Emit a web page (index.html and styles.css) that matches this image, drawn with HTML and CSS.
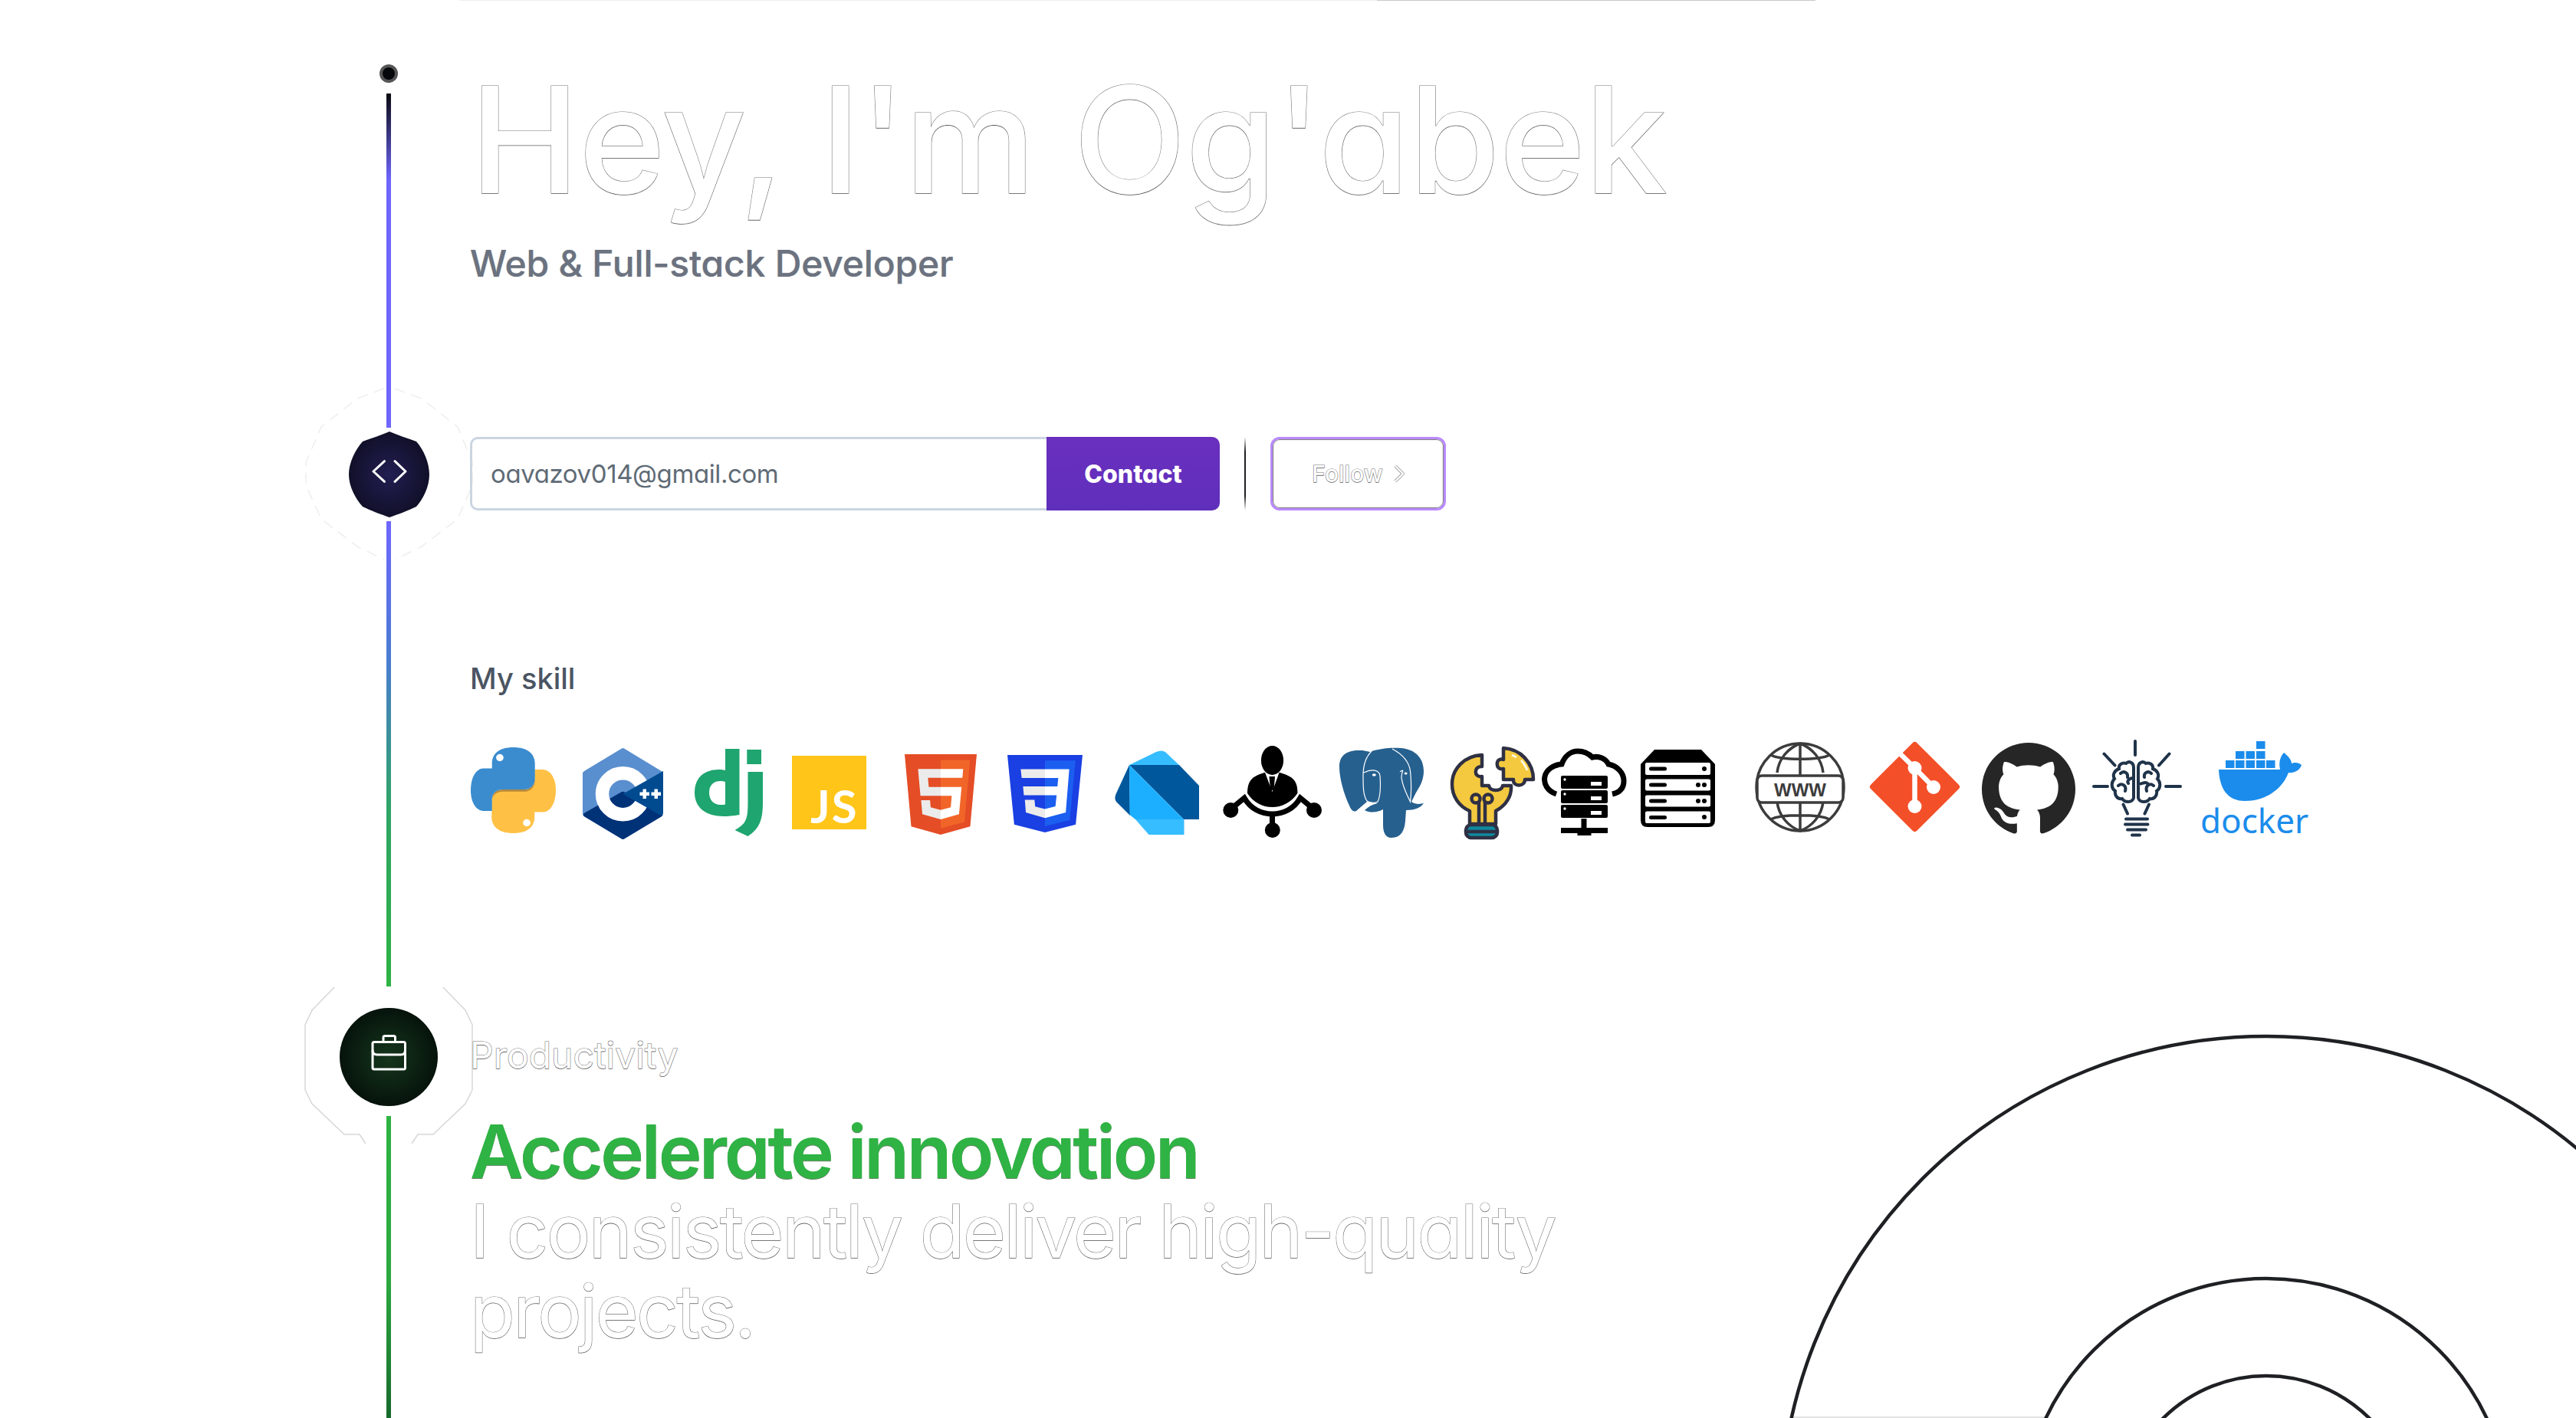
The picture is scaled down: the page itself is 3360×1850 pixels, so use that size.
FILE: index.html
```html
<!DOCTYPE html>
<html lang="en">
<head>
<meta charset="utf-8">
<title>Og'abek</title>
<link rel="stylesheet" href="styles.css">
</head>
<body>
<div class="hairline"></div><div class="hairline-dark"></div>
<svg class="arcs" viewBox="0 0 1060 520">
  <path fill="none" stroke="#e2e2e2" stroke-width="2" d="M37 519H370"/>
  <g fill="none" stroke="#1f2024" stroke-width="4.500">
    <circle cx="656" cy="656" r="634"/>
    <circle cx="656" cy="656" r="318"/>
    <circle cx="656" cy="656" r="191"/>
  </g>
</svg>
<main class="page">
  <aside class="rail">
    <span class="dot"></span>
    <span class="seg seg-a"></span>
    <svg class="node node-code" viewBox="0 0 105 112">
      <defs><radialGradient id="gc"><stop offset="0" stop-color="#211e52"/><stop offset="1" stop-color="#111029"/></radialGradient></defs>
      <path class="halo" stroke-dasharray="14 9" d="M46 -56 L11 -43 L-36 -6 L-56 40 V70 L-36 114 L11 150 L46 167 M60 -56 L95 -43 L142 -6 L161 40 V70 L142 114 L95 150 L60 167"/>
      <path fill="url(#gc)" d="M53 0C42 5 28 9 18 13C9 23 0 40 0 56C0 72 9 88 18 98C28 103 42 108 53 112C64 108 78 103 88 98C97 88 105 72 105 56C105 40 97 23 88 13C78 9 64 5 53 0Z"/>
      <path fill="none" stroke="#fff" stroke-width="3" stroke-linecap="round" stroke-linejoin="round" d="M46.500 38.700L32 52L46.500 65.300M60 38.700L74 52L60 65.300"/>
    </svg>
    <span class="seg seg-b"></span>
    <svg class="node node-work" viewBox="0 0 128 128">
      <defs><radialGradient id="gw"><stop offset="0" stop-color="#15361c"/><stop offset="1" stop-color="#06130c"/></radialGradient></defs>
      <path class="halo halo-strong" d="M-7 -27L-36 3L-45 22V107L-36 125L6 165H26L34 177M135 -27L164 3L173 22V107L164 125L122 165H102L94 177"/>
      <circle cx="64" cy="64" r="64" fill="url(#gw)"/>
      <g fill="none" stroke="#fff" stroke-width="3" stroke-linejoin="round">
        <rect x="43" y="44.500" width="42.500" height="35.500" rx="2"/>
        <path d="M43 55q0 6 6 6H80q5.500 0 5.500-6"/>
        <path d="M57 44V38.500q0-2 2-2H70.500q2 0 2 2V44"/>
      </g>
    </svg>
    <span class="seg seg-c"></span>
  </aside>

  <section class="content">
    <h1 class="title ghost">Hey, I'm Og'abek</h1>
    <p class="role">Web &amp; Full-stack Developer</p>

    <div class="actions">
      <div class="email">oavazov014@gmail.com</div>
      <button class="contact">Contact</button>
      <span class="divider"></span>
      <button class="follow"><span class="ghost">Follow</span>
        <svg class="chev" viewBox="0 0 14 22"><path d="M2 1L12 11L2 21" fill="none" stroke="#9a9a9a" stroke-width="4"/><path d="M2 1L12 11L2 21" fill="none" stroke="#fff" stroke-width="2.400"/></svg>
      </button>
    </div>

    <h2 class="skill-head">My skill</h2>

    <div class="skills">
      <svg class="ic i-py" viewBox="0 0 24 24" preserveAspectRatio="none">
        <path fill="#ffc145" transform="rotate(180 12 12)" d="M12 0C8 0 6 1.800 6 4.500V5.900H3.600C1.500 5.900 0 8.500 0 12C0 15.400 1.500 17.800 3.800 17.800H6V14.500C6 12.900 7.200 11.800 9 11.800H15C16.900 11.800 18.100 10.500 18.100 8.800V4.500C18.100 1.800 16 0 12 0Z"/>
        <path fill="#b8893a" d="M6 14.500C6 12.900 7.200 11.800 9 11.800H15C16.900 11.800 18.100 10.500 18.100 8.800V9.300C18.100 11 16.900 12.400 15 12.400H9C7.200 12.400 6 13.500 6 15Z"/>
        <path fill="#3a8ccf" d="M12 0C8 0 6 1.800 6 4.500V5.900H3.600C1.500 5.900 0 8.500 0 12C0 15.400 1.500 17.800 3.800 17.800H6V14.500C6 12.900 7.200 11.800 9 11.800H15C16.900 11.800 18.100 10.500 18.100 8.800V4.500C18.100 1.800 16 0 12 0Z"/>
        <ellipse cx="8.200" cy="2.900" rx="1.050" ry="1" fill="#fff"/>
        <ellipse cx="15.800" cy="21.100" rx="1.050" ry="1" fill="#fff"/>
      </svg>

      <svg class="ic i-cpp" viewBox="0 0 105 119">
        <path fill="#5a8fcf" stroke="#5a8fcf" stroke-width="6" stroke-linejoin="round" d="M52.500 3L102 33V86L52.500 116L3 86V33Z"/>
        <path fill="#003278" stroke="#003278" stroke-width="6" stroke-linejoin="round" d="M4 87L52.500 59.700L101 87L52.500 116Z"/>
        <circle cx="52.500" cy="59.700" r="27" fill="none" stroke="#fff" stroke-width="17.500"/>
        <path fill="#004b90" d="M52.500 59.700L105 30V85L102 88Z"/>
        <path fill="#fff" d="M78.500 53.500h4.500v4h4v4.500h-4v4h-4.500v-4h-4v-4.500h4ZM93.500 53.500h4.500v4h4v4.500h-4v4h-4.500v-4h-4v-4.500h4Z"/>
      </svg>

      <svg class="ic i-dj" viewBox="0 0 89 114">
        <path fill="#1fa56f" fill-rule="evenodd" d="M40 0H58.500V86C50 87.500 44 88 38 88C15 88 0 77 0 57C0 37 13 27 32 27C35 27 38 27.500 40 28ZM40 43C38 42.500 36 42 34 42C24 42 19 48 19 57C19 66 24 73 34 73C36 73 38 73 40 72.500Z"/>
        <path fill="#1fa56f" d="M68.300 1H87V20H68.300ZM69.500 30H89V70C89 92 85 104 69.500 114L52.500 106C67 98 69.500 92 69.500 70Z"/>
      </svg>

      <svg class="ic i-js" viewBox="0 0 97 96">
        <rect width="97" height="96" fill="#ffc518"/>
        <text class="js-word" x="24" y="88">JS</text>
      </svg>

      <svg class="ic i-html" viewBox="30 0 452 512" preserveAspectRatio="none">
        <path fill="#e44d26" d="M71 460L30 0H482L441 460L255.500 512Z"/>
        <path fill="#f16529" d="M256 472L405 431L440 37H256Z"/>
        <path fill="#ebebeb" d="M256 208H181L176 150H256V94H114L115 109L129 265H256ZM256 355L193 338L189 293H133L141 382L256 414Z"/>
        <path fill="#fff" d="M256 208V265H325L319 338L256 355V414L371 382L387 208ZM256 94V150H392L397 94Z"/>
      </svg>

      <svg class="ic i-css" viewBox="30 0 452 512" preserveAspectRatio="none">
        <path fill="#1a3fe2" d="M71 460L30 0H482L441 460L255.500 512Z"/>
        <path fill="#1b5ef0" d="M256 472L405 431L440 37H256Z"/>
        <path fill="#ebebeb" d="M110 94H256V152H116ZM124 208H256V266H129ZM135 296H193L197 341L256 357V417L141 380Z"/>
        <path fill="#fff" d="M256 94H402L381 380L256 417V357L319 340L326 266H256V208H331L336 152H256Z"/>
      </svg>

      <svg class="ic i-dart" viewBox="0 0 110 110">
        <path fill="#36bdff" d="M19 19L54 2Q63 -2 68 4L84 19Z"/>
        <path fill="#01579b" d="M19 19L2 56Q-2 64 4 69L20 85Z"/>
        <path fill="#01579b" d="M19 19H84L110 46V90H90Z"/>
        <path fill="#1cafff" d="M19 19L90 90H27L19.500 84Z"/>
        <path fill="#36bdff" d="M27 90H90.500V110H44.500Z"/>
      </svg>

      <svg class="ic i-person" viewBox="0 0 129 120">
        <ellipse cx="64.500" cy="19" rx="14.600" ry="19"/>
        <path d="M55 34.700C40 39 32 44 32 62C40 74 52 80 64.500 80C77 80 89 74 97.400 62C98 44 89 39 73.600 34.700L64.500 60Z"/>
        <path d="M60.500 40H68L66.500 58H62Z"/>
        <path fill="none" stroke="#000" stroke-width="7" d="M16 78L28 68C36 82 50 89 64.500 89C79 89 93 82 101 68L113 78M64.500 89V106"/>
        <circle cx="10.300" cy="84" r="10"/><circle cx="119" cy="84" r="10"/><circle cx="64.800" cy="110" r="10"/>
      </svg>

      <svg class="ic i-pg" viewBox="0 0 111 117">
        <path fill="#26608f" d="M0 24C0 8 12 2 28 3C32 3 36 4 40 5C50 1 65 -1 81 0C100 2 110 14 110 30C110 42 105 50 100 58L94 70C100 74 105 73 110 72C106 78 98 81 87 81L86 95C85 108 80 117 68 117C60 117 57 110 57 100L57 80C50 84 40 85 33 81C38 76 44 73 50 72L36 70L22 82C18 84 15 80 13 75C6 60 0 40 0 24Z"/>
        <path fill="none" stroke="#fff" stroke-width="1.200" d="M42 4C34 12 31 24 31 36C31 50 31 62 36 69C40 72 47 72 50 70C54 62 54 50 53 36C52 28 42 27 32 32M69 1C82 8 91 18 92.500 30C94 45 94 58 92.500 70C88 60 82 50 81 38C81 30 86 27 79 30.700"/>
        <ellipse cx="45.300" cy="35" rx="2.500" ry="1.800" fill="#fff"/><ellipse cx="86.600" cy="33" rx="2" ry="1.500" fill="#fff"/>
      </svg>

      <svg class="ic i-bulb" viewBox="0 0 110 122">
        <g stroke="#2f3044" stroke-width="4.500" stroke-linejoin="round">
          <path fill="#f5c93f" d="M41 12C18 13 2 30 2 50C2 66 11 79 25 85V102H59V85C72 78 80 66 79 52H68C67 60 51 60 50 52H41V40C30 42 30 26 41 27Z"/>
          <path fill="#f5c93f" d="M69 3C91 4 108 22 108 44H97C97 54 81 54 82 44H69V30C58 33 58 14 69 18Z"/>
          <path fill="none" d="M37 102V72M45 102V72"/>
          <circle cx="33" cy="69" r="5.500" fill="none"/><circle cx="49" cy="69" r="5.500" fill="none"/>
          <rect x="20" y="103" width="41" height="17" rx="7" fill="#0e8a9e"/>
          <path fill="none" d="M20 112H61"/>
        </g>
        <path fill="none" stroke="#fff8e0" stroke-width="3" d="M80 12L86 15M92 19C96 23 98 27 100 32"/>
      </svg>

      <svg class="ic i-cloud" viewBox="0 0 109 113">
        <path fill="none" stroke="#000" stroke-width="7" d="M18 59C6 55 1 45 3 36C5 27 14 21 25 20C29 9 37 3 46 3C54 3 60 6 65 11C73 9 82 12 86 20C97 22 106 31 106 42C106 52 100 57 91 59"/>
        <rect x="24" y="35" width="61" height="17" rx="2"/><rect x="24" y="54" width="61" height="17" rx="2"/><rect x="24" y="73" width="61" height="17" rx="2"/>
        <g fill="#fff">
          <circle cx="29" cy="40" r="1.700"/><rect x="63" y="43" width="14" height="5"/>
          <circle cx="29" cy="59" r="1.700"/><rect x="63" y="62" width="14" height="5"/>
          <circle cx="29" cy="78" r="1.700"/><rect x="63" y="81" width="14" height="5"/>
        </g>
        <path d="M50.500 91H57.500V103H85V110H63.500V113H45.500V110H24V103H50.500Z"/>
      </svg>

      <svg class="ic i-stack" viewBox="0 0 97 101">
        <path d="M18 0H79L97 19V92Q97 101 88 101H9Q0 101 0 92V19Z"/>
        <g fill="#fff">
          <rect x="6" y="17" width="85" height="16" rx="2"/><rect x="6" y="38.500" width="85" height="15" rx="2"/>
          <rect x="6" y="59.500" width="85" height="15" rx="2"/><rect x="6" y="80.500" width="85" height="15.500" rx="2"/>
        </g>
        <rect x="11" y="22.500" width="23" height="5" rx="2.500"/><rect x="11" y="43.500" width="23" height="5" rx="2.500"/>
        <rect x="11" y="64.500" width="23" height="5" rx="2.500"/><rect x="11" y="86" width="23" height="5" rx="2.500"/>
        <circle cx="83" cy="25" r="3"/><circle cx="75" cy="46" r="3"/><circle cx="83" cy="46" r="3"/>
        <circle cx="75" cy="67" r="3"/><circle cx="83" cy="67" r="3"/><circle cx="83" cy="88" r="3"/>
      </svg>

      <svg class="ic i-www" viewBox="0 0 116 118">
        <g fill="none" stroke="#3c3c3c" stroke-width="3.500">
          <circle cx="58" cy="59" r="57"/>
          <path d="M58 2V116M28 40C30 22 42 8 58 2C74 8 86 22 88 40M28 78C30 96 42 110 58 116C74 110 86 96 88 78M20 17C32 24 84 24 96 17M20 101C32 94 84 94 96 101"/>
          <rect x="2" y="44" width="112" height="35" rx="6" fill="#fff"/>
        </g>
        <text class="www-word" x="58" y="71">WWW</text>
      </svg>

      <svg class="ic i-git" viewBox="0 0 117 117">
        <path fill="#f34f29" stroke="#f34f29" stroke-width="8" stroke-linejoin="round" d="M58.500 4L113 58.500L58.500 113L4 58.500Z"/>
        <path fill="none" stroke="#fff" stroke-width="6.500" d="M39 15L58.500 34L83 59M58.500 34V84"/>
        <circle cx="58.500" cy="34" r="9" fill="#fff"/><circle cx="58.500" cy="84" r="9" fill="#fff"/><circle cx="83" cy="59" r="9" fill="#fff"/>
      </svg>

      <svg class="ic i-gh" viewBox="0 0.300 24 23.500" preserveAspectRatio="none">
        <path fill="#262626" d="M12 .297c-6.630 0-12 5.373-12 12 0 5.303 3.438 9.800 8.205 11.385.6.113.82-.258.82-.577 0-.285-.01-1.040-.015-2.040-3.338.724-4.042-1.610-4.042-1.610C4.422 18.070 3.633 17.700 3.633 17.700c-1.087-.744.084-.729.084-.729 1.205.084 1.838 1.236 1.838 1.236 1.070 1.835 2.809 1.305 3.495.998.108-.776.417-1.305.76-1.605-2.665-.3-5.466-1.332-5.466-5.930 0-1.310.465-2.380 1.235-3.220-.135-.303-.54-1.523.105-3.176 0 0 1.005-.322 3.300 1.230.96-.267 1.980-.399 3-.405 1.020.006 2.040.138 3 .405 2.280-1.552 3.285-1.230 3.285-1.230.645 1.653.24 2.873.12 3.176.765.84 1.230 1.910 1.230 3.220 0 4.610-2.805 5.625-5.475 5.920.42.36.81 1.096.81 2.220 0 1.606-.015 2.896-.015 3.286 0 .315.21.69.825.57C20.565 22.092 24 17.592 24 12.297c0-6.627-5.373-12-12-12"/>
      </svg>

      <svg class="ic i-brain" viewBox="0 0 117 128">
        <g fill="none" stroke="#1f3349" stroke-linecap="round" stroke-width="4">
          <path d="M56 2V20M15.500 18.500L29.500 33.500M100.500 18.500L87 33.500M2 61H20M96 61H115M40.500 84.500L46 96.500M74 84.500L68.500 96.500M44 103.500H72M43 110.500H72.500M46 117.500H70M52 124.500H62"/>
          <path d="M54 36C54 30 48 27 44 31C39 29 34 33 35 38C29 40 26 46 29 51C24 56 25 64 30 67C29 73 33 78 39 77C42 82 52 83 54 76ZM37 44C41 40 47 43 46 49M54 50C48 50 45 54 47 57M34 60C39 56 45 60 43 67"/>
          <path d="M60 36C60 30 66 27 70 31C75 29 80 33 79 38C85 40 88 46 85 51C90 56 89 64 84 67C85 73 81 78 75 77C72 82 62 83 60 76ZM77 44C73 40 67 43 68 49M60 58C66 58 69 54 72 57M80 60C75 56 69 60 71 67"/>
        </g>
      </svg>

      <svg class="ic i-docker" viewBox="0 0 144 123">
        <g fill="#1b8ceb">
          <rect x="73" y="0" width="11.500" height="10"/>
          <rect x="46" y="13" width="11.500" height="10"/><rect x="59.500" y="13" width="11.500" height="10"/><rect x="73" y="13" width="11.500" height="10"/>
          <rect x="33" y="25" width="11.500" height="10"/><rect x="46" y="25" width="11.500" height="10"/><rect x="59.500" y="25" width="11.500" height="10"/><rect x="73" y="25" width="11.500" height="10"/><rect x="86" y="25" width="11.500" height="10"/>
          <path d="M24 37H104C102 28 104 20 109 15C114 19 119 24 119 29C123 27 129 28 132 31C130 38 122 42 115 41C108 60 88 78 58 78C34 78 25 60 24 37Z"/>
        </g>
        <text class="docker-word" x="0" y="120">docker</text>
      </svg>
    </div>

    <p class="eyebrow ghost">Productivity</p>
    <h2 class="headline">Accelerate innovation</h2>
    <p class="lead ghost">I consistently deliver high-quality<br>projects.</p>
  </section>
</main>
</body>
</html>
```

FILE: styles.css
```css
* { box-sizing: border-box; }
html, body { margin: 0; height: 100%; }
body {
  position: relative;
  width: 3360px;
  height: 1850px;
  overflow: hidden;
  background: #fff;
  font-family: "Inter", "Liberation Sans", sans-serif;
  font-feature-settings: "cv11" 1;
}
.hairline { position: absolute; top: 0; left: 599px; width: 1197px; height: 1px; background: #eee; }
.hairline-dark { position: absolute; top: 0; left: 1796px; width: 572px; height: 1px; background: #c9c9c9; }
.arcs { position: absolute; right: 0; bottom: 0; width: 1060px; height: 520px; }

.page { display: flex; height: 1850px; padding-left: 437px; }

.rail { width: 140px; flex: none; height: 1850px; display: flex; flex-direction: column; align-items: center; padding-top: 84px; }
.dot { width: 24px; height: 24px; border-radius: 50%; background: #05070b; border: 4px solid #555; flex: none; }
.seg { width: 6px; flex: none; }
.seg-a { height: 436px; margin-top: 14px; background: linear-gradient(#0a0a10, #6f66ff 26%); }
.seg-b { height: 607px; margin-top: 5px; background: linear-gradient(#6f66ff 0%, #4a7dd0 30%, #2fa566 62%, #2fb344 100%); }
.seg-c { height: 394px; margin-top: 13px; background: linear-gradient(#2fb344, #2ca840 55%, #176a2c); }
.node { overflow: visible; flex: none; display: block; }
.node-code { width: 105px; height: 112px; margin-top: 5px; }
.node-work { width: 128px; height: 128px; margin-top: 28px; }
.halo { fill: none; stroke: rgba(0, 0, 0, .07); stroke-width: 1.5; }
.halo-strong { stroke: rgba(0, 0, 0, .16); }

.content { margin-left: 36px; padding-top: 86px; flex: 1; min-width: 0; }
.ghost {
  color: #fff;
  -webkit-text-stroke: 1.1px #777;
  paint-order: stroke fill;
  text-shadow: 0 1px 0 rgba(0, 0, 0, .35);
}
.title { margin: 0; font-size: 192px; line-height: 192px; font-weight: 500; letter-spacing: -1px; white-space: nowrap; }
.role { margin: 36px 0 0; font-size: 48px; line-height: 60px; font-weight: 500; color: #6b7280; letter-spacing: -.2px; text-shadow: 0 0 1px rgba(0, 0, 0, .35); }

.actions { display: flex; align-items: stretch; height: 96px; margin-top: 196px; }
.email {
  width: 752px;
  display: flex;
  align-items: center;
  padding-left: 24px;
  border: 3px solid #cbd5e1;
  border-right: 0;
  border-radius: 10px 0 0 10px;
  font-size: 33px;
  letter-spacing: -.4px;
  color: #5f6b76;
}
.contact {
  width: 226px;
  border: 0;
  border-radius: 0 10px 10px 0;
  background: linear-gradient(#6a2fbe, #5f2fbb);
  color: #fff;
  font: inherit;
  font-size: 32px;
  font-weight: 800;
}
.divider { width: 2px; margin-left: 32px; background: linear-gradient(#fff, #1f2024 20%, #1f2024 80%, #fff); }
.follow {
  width: 229px;
  margin-left: 32px;
  border: 3px solid #b98aff;
  border-radius: 12px;
  background: #fff;
  box-shadow: inset 0 0 1px 1px rgba(0, 0, 0, .55);
  display: flex;
  align-items: center;
  justify-content: center;
  gap: 14px;
  font: inherit;
  font-size: 30px;
  font-weight: 500;
}
.chev { width: 14px; height: 22px; display: block; }

.skill-head { margin: 197px 0 0; font-size: 38px; line-height: 44px; font-weight: 500; color: #4b5563; letter-spacing: 0; }

.skills { display: flex; align-items: flex-start; height: 130px; margin-top: 58px; }
.ic { display: block; flex: none; overflow: visible; }
.i-py { width: 111px; height: 112px; margin: 10px 0 0 1px; }
.i-cpp { width: 105px; height: 119px; margin: 11px 0 0 35px; }
.i-dj { width: 89px; height: 114px; margin: 12px 0 0 41px; }
.i-js { width: 97px; height: 96px; margin: 21px 0 0 38px; }
.i-html { width: 94px; height: 105px; margin: 19px 0 0 50px; }
.i-css { width: 98px; height: 101px; margin: 20px 0 0 40px; }
.i-dart { width: 110px; height: 110px; margin: 14px 0 0 42px; }
.i-person { width: 129px; height: 120px; margin: 8px 0 0 31px; }
.i-pg { width: 111px; height: 117px; margin: 11px 0 0 23px; }
.i-bulb { width: 110px; height: 122px; margin: 8px 0 0 34px; }
.i-cloud { width: 109px; height: 113px; margin: 12px 0 0 10px; }
.i-stack { width: 97px; height: 101px; margin: 13px 0 0 19px; }
.i-www { width: 116px; height: 118px; margin: 3px 0 0 53px; }
.i-git { width: 117px; height: 117px; margin: 3px 0 0 33px; }
.i-gh { width: 122px; height: 119px; margin: 4px 0 0 29px; }
.i-brain { width: 117px; height: 128px; margin: 0 0 0 22px; }
.i-docker { width: 144px; height: 123px; margin: 2px 0 0 24px; }

.js-word { font-family: "Lato", sans-serif; font-weight: 700; font-size: 60px; letter-spacing: 2px; fill: #fff; font-feature-settings: normal; }
.www-word { font-family: "Liberation Sans", sans-serif; font-size: 24px; font-weight: 700; fill: #3c3c3c; text-anchor: middle; }
.docker-word { font-family: "Noto Sans", sans-serif; font-size: 44px; fill: #1b8ceb; font-feature-settings: normal; }

.eyebrow { margin: 252px 0 0; font-size: 48px; line-height: 60px; font-weight: 400; letter-spacing: 0; }
.headline { margin: 43px 0 0; font-size: 96px; line-height: 104px; font-weight: 600; color: #2fb344; letter-spacing: -3.3px; text-shadow: 0 1px 0 rgba(0, 50, 0, .6); }
.lead { margin: 0; font-size: 96px; line-height: 104px; font-weight: 400; letter-spacing: -2.6px; }
```
